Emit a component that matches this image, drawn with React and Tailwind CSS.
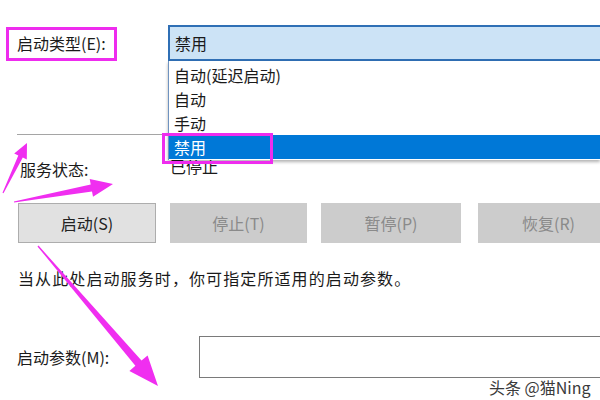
import React from 'react';

const font = { fontFamily: '"Noto Sans CJK SC", "Noto Sans", sans-serif' };

// 把一条从尾到尖的箭头算成多边形点
const arrowPoints = (x1, y1, x2, y2, head, half, shaft) => {
  const dx = x2 - x1;
  const dy = y2 - y1;
  const len = Math.hypot(dx, dy);
  const ux = dx / len;
  const uy = dy / len;
  const nx = -uy;
  const ny = ux;
  const bx = x2 - ux * head;
  const by = y2 - uy * head;
  const pts = [
    [x1 + nx * 0.6, y1 + ny * 0.6],
    [bx + nx * shaft, by + ny * shaft],
    [bx + nx * half, by + ny * half],
    [x2, y2],
    [bx - nx * half, by - ny * half],
    [bx - nx * shaft, by - ny * shaft],
    [x1 - nx * 0.6, y1 - ny * 0.6],
  ];
  return pts.map((p) => p.map((v) => v.toFixed(1)).join(',')).join(' ');
};

const arrows = [
  [3, 193, 27, 143, 15, 7, 2.5],
  [14, 202, 113, 184, 22, 9, 3.5],
  [38, 246, 158, 386, 30, 12, 4],
];

const Btn = ({ children, active, w }) => (
  <div
    className={
      'shrink-0 h-[40px] flex items-center justify-center text-[16px] border ' +
      (active ? 'bg-[#e1e1e1] border-[#adadad] text-[#222]' : 'bg-[#cccccc] border-[#cccccc] text-[#8a8a8a]')
    }
    style={{ width: w }}
  >
    {children}
  </div>
);

const App = () => {
  return (
    <div className="relative w-[600px] h-[400px] overflow-hidden bg-white text-[#1a1a1a]" style={font}>
      <div className="pt-[25px]">
        {/* 启动类型 */}
        <div className="flex items-center h-[36px]">
          <div className="w-[168px] pl-[17px] text-[16px]">启动类型(E):</div>
          <div className="flex-1 h-[36px] mr-[-10px] border-2 border-[#2f6fb5] bg-[#cce3f6] flex items-center pl-[5px] text-[16px]">
            禁用
          </div>
        </div>

        <div className="mt-[73px] ml-[17px] h-px bg-[#a5a5a5]" />

        {/* 服务状态 */}
        <div className="mt-[22px] flex items-center h-[24px] text-[16px]">
          <div className="w-[170px] pl-[20px]">服务状态:</div>
          <div className="mb-[6px]">已停止</div>
        </div>

        {/* 按钮 */}
        <div className="mt-[22px] pl-[18px] flex gap-[14px] overflow-hidden">
          <Btn active w={138}>启动(S)</Btn>
          <Btn w={137}>停止(T)</Btn>
          <Btn w={140}>暂停(P)</Btn>
          <div className="shrink-0 ml-[3px]">
            <Btn w={141}>恢复(R)</Btn>
          </div>
        </div>

        <div className="mt-[24px] pl-[18px] h-[22px] flex items-center text-[16px] tracking-[1.1px]">
          当从此处启动服务时，你可指定所适用的启动参数。
        </div>

        {/* 启动参数 */}
        <div className="mt-[47px] flex items-center">
          <div className="w-[199px] pl-[17px] text-[16px]">启动参数(M):</div>
          <div className="flex-1 h-[42px] mr-[-10px] border border-[#7a7a7a] bg-white" />
        </div>
      </div>

      {/* 下拉列表 */}
      <div className="absolute left-[168px] top-[61px] right-0 bg-white border-l border-[#6f93c0] pt-[2px] pb-px shadow-[0_2px_3px_rgba(0,0,0,0.3)] text-[16px]">
        <div className="h-[24px] flex items-center pl-[5px]">自动(延迟启动)</div>
        <div className="h-[24px] flex items-center pl-[5px]">自动</div>
        <div className="h-[24px] flex items-center pl-[5px]">手动</div>
        <div className="h-[24px] flex items-center pl-[5px] bg-[#0078d7] text-white">禁用</div>
      </div>

      {/* 标注框 */}
      <div className="absolute left-[6px] top-[27px] w-[111px] h-[34px] border-[3px] border-[#ee2cee]" />
      <div className="absolute left-[162px] top-[133px] w-[111px] h-[31px] border-[3px] border-[#ee2cee]" />

      {/* 箭头 */}
      <svg className="absolute inset-0 pointer-events-none" width="600" height="400" viewBox="0 0 600 400">
        {arrows.map((a, i) => (
          <polygon key={i} points={arrowPoints(...a)} fill="#f02ef0" />
        ))}
      </svg>

      {/* 水印 */}
      <div className="absolute left-[489px] top-[378px] text-[16px] leading-[18px] text-[#3a3a3a] [text-shadow:0_0_2px_#fff,0_0_2px_#fff]">
        头条 @猫Ning
      </div>
    </div>
  );
};

export default App;
